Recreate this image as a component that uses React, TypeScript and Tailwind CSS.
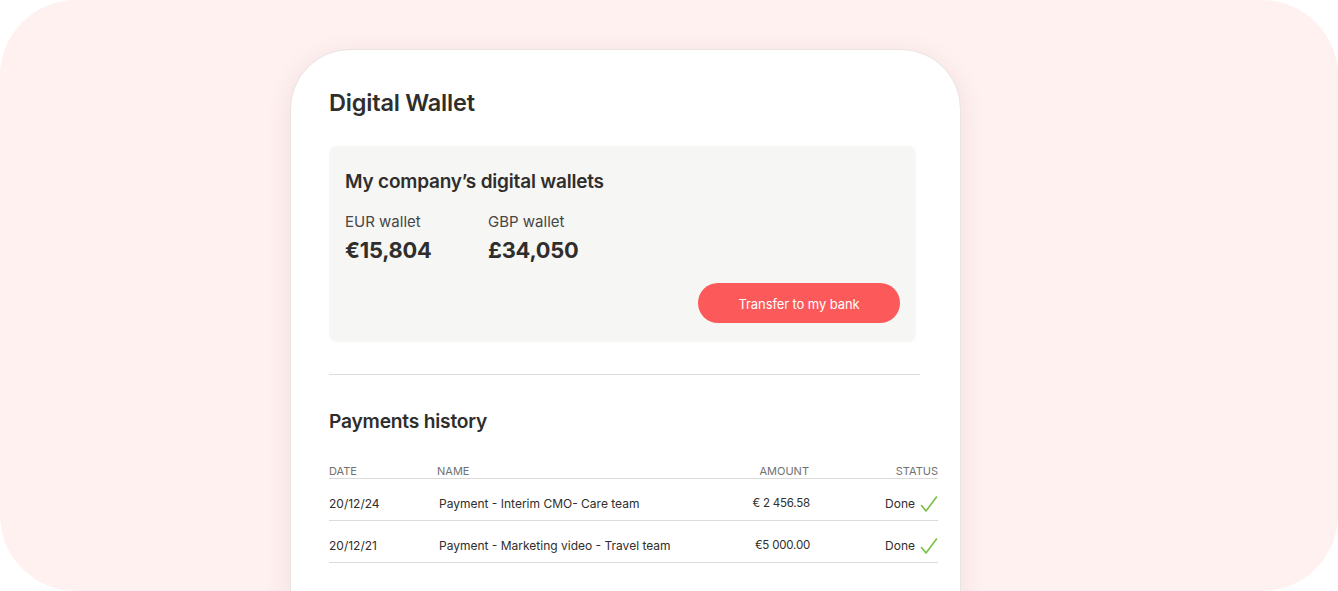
import React from 'react';

const FONT = { fontFamily: 'Inter, "Noto Sans", sans-serif' };

type Payment = { date: string; name: string; amount: string; status: string };

const payments: Payment[] = [
  { date: '20/12/24', name: 'Payment - Interim CMO- Care team', amount: '€ 2 456.58', status: 'Done' },
  { date: '20/12/21', name: 'Payment - Marketing video - Travel team', amount: '€5 000.00', status: 'Done' },
];

const wallets = [
  { label: 'EUR wallet', value: '€15,804' },
  { label: 'GBP wallet', value: '£34,050' },
];

const Check: React.FC = () => (
  <svg width="18" height="17" viewBox="0 0 18 17" fill="none" className="shrink-0">
    <path d="M1.5 9.5 L6 15 L16.5 1" stroke="#76c043" strokeWidth="1.6" strokeLinecap="round" strokeLinejoin="round" />
  </svg>
);

export default function App() {
  return (
    <div className="w-[1338px] h-[591px] bg-white" style={FONT}>
      <div className="h-full w-full rounded-[76px] bg-[#fff1f0] overflow-hidden flex pl-[290px] pt-[49px]">
        <div className="w-[671px] h-[600px] shrink-0 bg-white rounded-t-[60px] border border-[#e9e3e2] shadow-[0_6px_28px_rgba(60,30,30,0.08)] pl-[38px] pt-[39px] text-[#2f2e2c]">
          <h1 className="text-[23.5px] leading-[28px] font-semibold tracking-[-0.2px]">Digital Wallet</h1>

          <div className="mt-[29px] w-[587px] rounded-[8px] bg-[#f6f6f4] pl-4 pr-4 pt-6 pb-[19px]">
            <h2 className="text-[19px] leading-6 font-semibold tracking-[-0.2px]">My company’s digital wallets</h2>
            <div className="mt-[18px] flex">
              {wallets.map((w) => (
                <div key={w.label} className="w-[143px]">
                  <div className="text-[15px] leading-5 text-[#474644]">{w.label}</div>
                  <div className="mt-[4px] text-[21.8px] leading-7 font-bold tracking-[-0.2px]">{w.value}</div>
                </div>
              ))}
            </div>
            <div className="mt-[19px] flex justify-end">
              <button className="w-[202px] h-10 rounded-full bg-[#fc5a5a] text-white text-[13px] tracking-[-0.1px] pt-[3px]">
                Transfer to my bank
              </button>
            </div>
          </div>

          <div className="mt-[32px] w-[591px] border-t border-[#dedddb]" />

          <h2 className="mt-[33px] text-[19.2px] leading-[26px] font-semibold tracking-[-0.2px]">Payments history</h2>

          <div className="mt-[30px] w-[609px]">
            <div className="grid grid-cols-[108px_1fr_110px_128px] border-b border-[#dcdbd9] text-[11px] leading-[14px] uppercase text-[#72716f]">
              <div>Date</div>
              <div>Name</div>
              <div className="text-right pr-[1px]">Amount</div>
              <div className="text-right">Status</div>
            </div>
            {payments.map((p) => (
              <div
                key={p.date}
                className="grid grid-cols-[108px_1fr_110px_128px] items-center h-[42px] pt-[9px] border-b border-[#dcdbd9] text-[12px] text-[#2f2e2c]"
              >
                <div>{p.date}</div>
                <div className="pl-[2px]">{p.name}</div>
                <div className="text-right text-[11.5px] tracking-[-0.2px]">{p.amount}</div>
                <div className="flex items-center justify-end gap-[5px]">
                  <span>{p.status}</span>
                  <Check />
                </div>
              </div>
            ))}
          </div>
        </div>
      </div>
    </div>
  );
}
